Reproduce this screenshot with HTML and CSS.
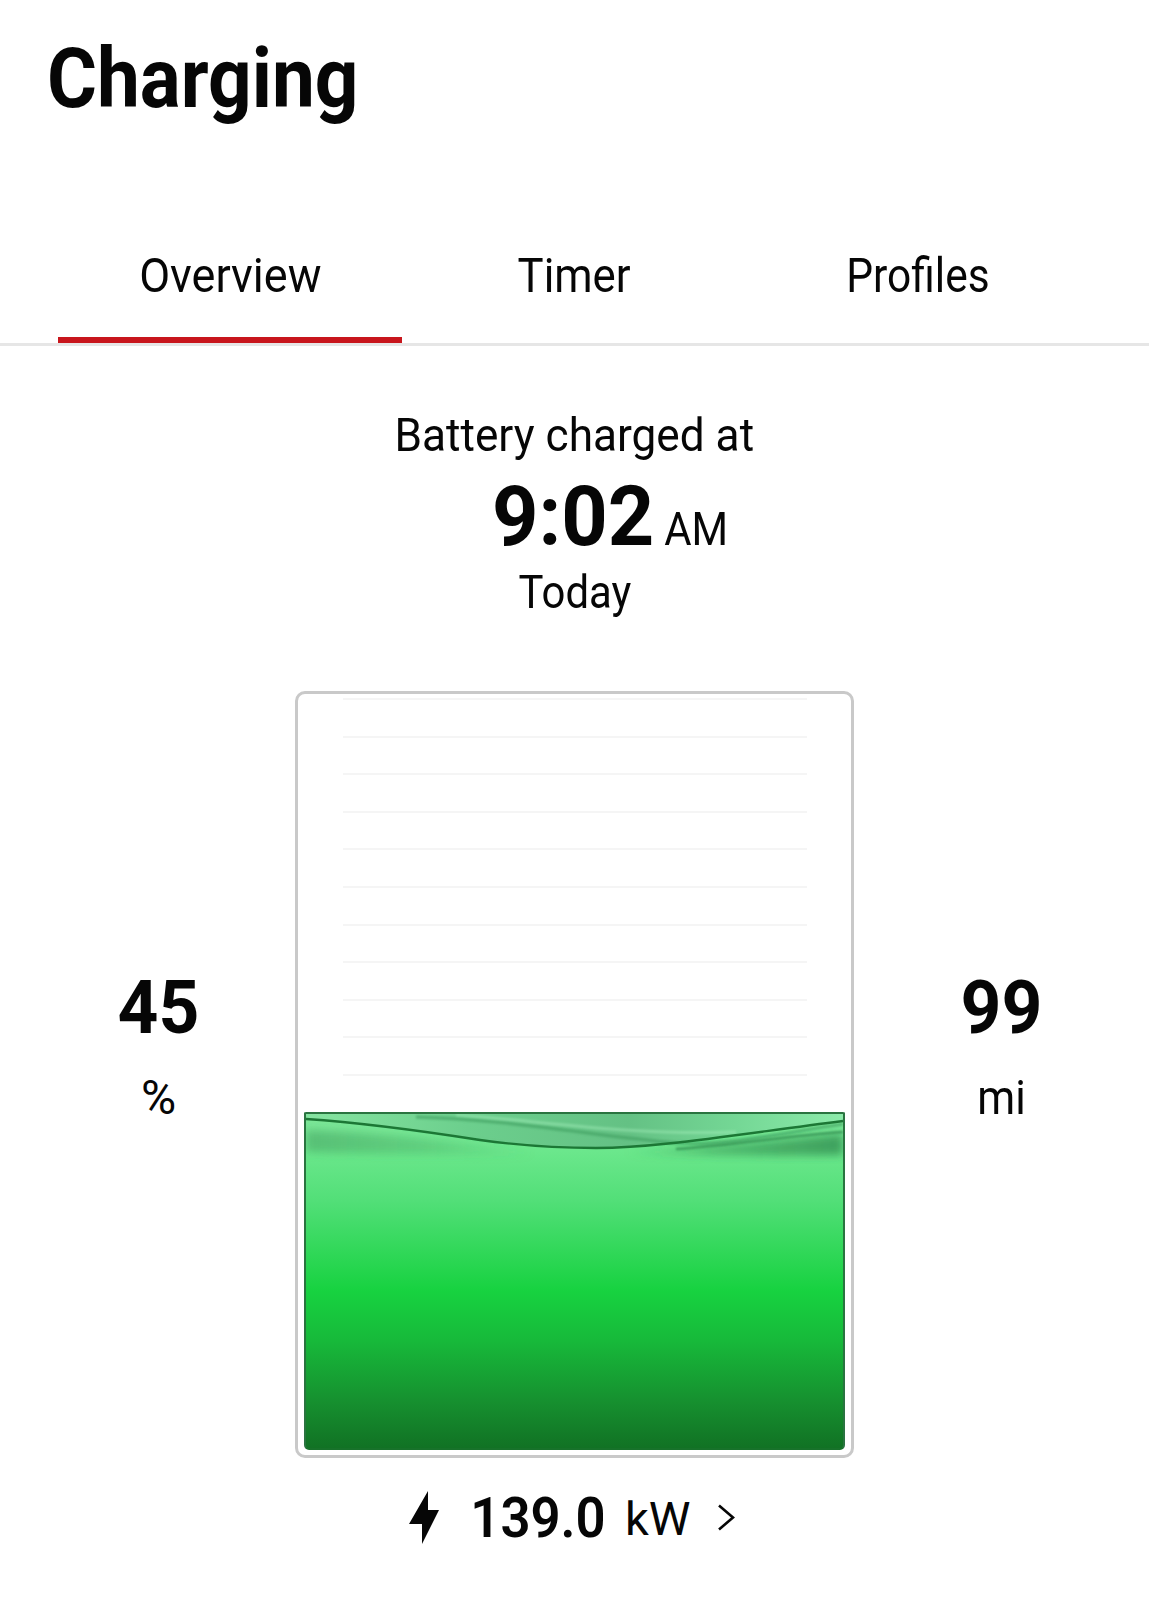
FILE: index.html
```html
<!DOCTYPE html>
<html lang="en">
<head>
<meta charset="utf-8">
<title>Charging</title>
<link rel="stylesheet" href="styles.css">
</head>
<body>
<main class="page">
  <h1 class="title">Charging</h1>
  <nav class="tabs">
    <a class="tab tab-active"><span class="tab-label tab-label-overview">Overview</span></a>
    <a class="tab"><span class="tab-label tab-label-timer">Timer</span></a>
    <a class="tab"><span class="tab-label tab-label-profiles">Profiles</span></a>
  </nav>
  <section class="status">
    <div class="status-line"><span class="status-text status-text-battery">Battery charged at</span></div>
    <div class="status-time"><strong class="time">9:02</strong><span class="ampm">AM</span></div>
    <div class="status-line"><span class="status-text status-text-day">Today</span></div>
  </section>
  <section class="gauge">
    <div class="stat stat-left">
      <div class="stat-value">45</div>
      <div class="stat-unit stat-unit-pct">%</div>
    </div>
    <div class="battery">
      <div class="empty">
        <i class="level"></i><i class="level"></i><i class="level"></i><i class="level"></i><i class="level"></i><i class="level"></i><i class="level"></i><i class="level"></i><i class="level"></i><i class="level"></i><i class="level"></i>
      </div>
      <div class="fill">
        <svg class="wave" viewBox="0 0 537 50" preserveAspectRatio="none">
          <defs>
            <linearGradient id="crest" x1="0" x2="1" y1="0" y2="0">
              <stop offset="0" stop-color="#85e4a0"/>
              <stop offset=".3" stop-color="#6ccf8d"/>
              <stop offset=".6" stop-color="#64c184"/>
              <stop offset=".8" stop-color="#74d795"/>
              <stop offset="1" stop-color="#8cebaa"/>
            </linearGradient>
            <linearGradient id="shade-left" x1="0" x2="1" y1="0" y2="0">
              <stop offset="0" stop-color="#3f9a5c" stop-opacity=".5"/>
              <stop offset=".5" stop-color="#3f9a5c" stop-opacity=".32"/>
              <stop offset="1" stop-color="#3f9a5c" stop-opacity="0"/>
            </linearGradient>
            <linearGradient id="shade-right" x1="1" x2="0" y1="0" y2="0">
              <stop offset="0" stop-color="#2f8a4d" stop-opacity=".75"/>
              <stop offset=".6" stop-color="#2f8a4d" stop-opacity=".5"/>
              <stop offset="1" stop-color="#2f8a4d" stop-opacity="0"/>
            </linearGradient>
            <filter id="soft" x="-5%" y="-60%" width="110%" height="220%"><feGaussianBlur stdDeviation="4"/></filter>
            <filter id="softer" x="-5%" y="-60%" width="110%" height="220%"><feGaussianBlur stdDeviation="1"/></filter>
          </defs>
          <path d="M0 0H537V7C420 22 350 34 290 34C250 34 210 31 174 26C110 16 60 9 0 5Z" fill="url(#crest)"/>
          <path d="M110 3C200 5 290 22 370 29C420 32 470 20 537 10" fill="none" stroke="#3f9f60" stroke-width="3.5" opacity=".6" filter="url(#softer)"/>
          <path d="M150 1C230 6 320 22 430 18" fill="none" stroke="#a6efbc" stroke-width="3" opacity=".45" filter="url(#softer)"/>
          <path d="M0 16C60 18 120 24 230 38V42C130 40 60 40 0 38Z" fill="url(#shade-left)" filter="url(#soft)"/>
          <path d="M537 20C470 26 420 33 320 36V40C430 42 490 42 537 41Z" fill="url(#shade-right)" filter="url(#soft)"/>
          <path d="M537 18C480 22 430 31 370 35" fill="none" stroke="#2f8a4d" stroke-width="2.5" opacity=".75" filter="url(#softer)"/>
          <path d="M0 5C60 9 110 16 174 26C210 31 250 34 290 34C350 34 420 22 537 7" fill="none" stroke="#1c7735" stroke-width="2.4"/>
        </svg>
      </div>
    </div>
    <div class="stat">
      <div class="stat-value">99</div>
      <div class="stat-unit">mi</div>
    </div>
  </section>
  <footer class="power">
    <svg class="bolt" viewBox="0 0 30 53"><path d="M19 0 0 33H13V53L30 19H19Z"/></svg>
    <strong class="power-value">139.0</strong>
    <span class="power-unit">kW</span>
    <svg class="chev" viewBox="0 0 17 27"><path d="M1 1.5 15 13.5 1 25.5"/></svg>
  </footer>
</main>
</body>
</html>
```
FILE: styles.css
```css
* { box-sizing: border-box; }
html, body { margin: 0; background: #fff; }
body { font-family: Roboto, "Liberation Sans", sans-serif; color: #060606; }
.page { width: 1149px; height: 1600px; overflow: hidden; }

.title { margin: 0 0 0 47px; padding-top: 31px; height: 238px; width: fit-content; font-size: 84px; line-height: 96px; font-weight: 700; transform: scaleX(.91); transform-origin: left; }

.tabs { display: flex; padding: 0 59px 0 58px; height: 108px; border-bottom: 3px solid #e6e6e6; }
.tab { flex: 1; height: 105px; text-align: center; font-size: 48px; line-height: 76px; }
.tab-active { border-bottom: 6px solid #c8161c; }
.tab-label { display: inline-block; }
.tab-label-overview { transform: scaleX(.937); }
.tab-label-timer { transform: scaleX(.91); }
.tab-label-profiles { transform: scaleX(.885); }

.status { padding-top: 59px; height: 345px; text-align: center; }
.status-line { font-size: 46px; line-height: 60px; }
.status-text { display: inline-block; }
.status-text-battery { transform: scaleX(.96); }
.status-text-day { transform: scaleX(.91); }
.status-time { display: flex; justify-content: center; align-items: baseline; height: 90px; margin-top: 7px; padding-left: 71px; gap: 4px; }
.time { font-size: 84px; line-height: 90px; font-weight: 700; transform: scaleX(.965); }
.ampm { font-size: 46px; line-height: 90px; transform: scaleX(.91); }

.gauge { display: grid; grid-template-columns: 295px 559px 295px; }
.stat { text-align: center; padding-top: 271px; }
.stat-left { padding-left: 22px; }
.stat-value { font-size: 75px; font-weight: 700; line-height: 90px; transform: scaleX(.95); }
.stat-unit { margin-top: 16px; font-size: 48px; line-height: 60px; transform: scaleX(.9); }
.stat-unit-pct { transform: none; }

.battery { height: 767px; border: 3px solid #c9c9c9; border-radius: 10px; padding: 0 6px 5px; display: flex; flex-direction: column; }
.empty { flex: 1; padding: 4px 38px 0 39px; display: flex; flex-direction: column; gap: 35.6px; }
.level { display: block; height: 2px; background: #f5f5f5; flex: none; }
.fill { position: relative; height: 338px; border: 2.5px solid #2a7440; border-bottom-color: #17722a; border-radius: 2px 2px 5px 5px; background: linear-gradient(#7fe59a 0, #6be78c 11%, #52df78 26%, #17d240 53%, #17b93a 68%, #16902f 86%, #117224 100%); }
.wave { position: absolute; left: 0; top: 0; width: 100%; height: 50px; display: block; }

.power { display: flex; align-items: center; height: 118px; padding-left: 409px; }
.bolt { flex: none; width: 30px; height: 53px; fill: #060606; margin-right: 27px; }
.power-value { margin-top: 2px; font-size: 56px; font-weight: 600; margin-right: 15px; transform: scaleX(.94); }
.power-unit { margin-top: 2px; font-size: 47px; margin-right: 28px; }
.chev { flex: none; width: 17px; height: 27px; fill: none; stroke: #060606; stroke-width: 2.6; }
```
